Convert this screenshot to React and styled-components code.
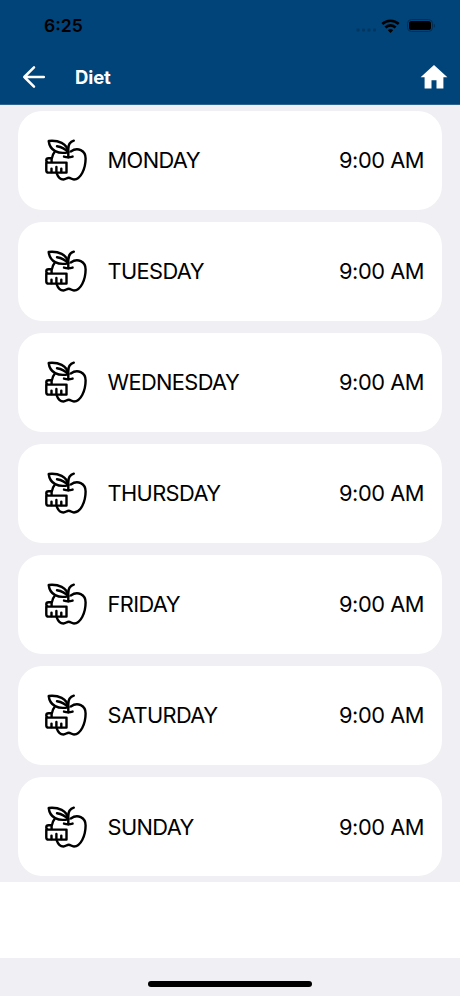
import React from 'react';
import styled, { createGlobalStyle } from 'styled-components'

const GlobalStyle = createGlobalStyle`
* {
  box-sizing: border-box;
}
body {
  margin: 0;
  background: #ffffff;
  font-family: Inter, "Liberation Sans", sans-serif;
}
`

const Screen = styled.div`
  display: flex;
  flex-direction: column;
  width: 460px;
  height: 996px;
  overflow: hidden;
  background: #ffffff;
`

const TopArea = styled.header`
  flex: none;
  height: 105px;
  border-bottom: 1px solid #2f6490;
  background: #004479;
`

const StatusBar = styled.div`
  display: flex;
  align-items: center;
  justify-content: space-between;
  height: 50px;
  padding: 1px 23px 0 44px;
`

const Clock = styled.span`
  font-size: 17.5px;
  font-weight: 600;
  color: #000000;
`

const StatusIcons = styled.div`
  display: flex;
  align-items: center;
`

const NavBar = styled.div`
  display: flex;
  align-items: center;
  height: 54px;
  padding: 0 12px 0 22px;
`

const Title = styled.h1`
  flex: 1;
  margin: 0 0 0 29px;
  font-size: 18.5px;
  font-weight: 700;
  letter-spacing: -0.1px;
  color: #ffffff;
`

const DayList = styled.main`
  display: flex;
  flex-direction: column;
  flex: none;
  gap: 11.4px;
  padding: 5.5px 18px 5.2px;
  background: #efeff4;
`

const DayCard = styled.div`
  display: flex;
  align-items: center;
  height: 99.65px;
  padding: 0 18px 0 26px;
  border-radius: 24px;
  background: #ffffff;
  font-size: 21.8px;
  color: #000000;
`

const DayName = styled.span`
  flex: 1;
  margin-left: 19.5px;
  letter-spacing: -0.6px;
`

const Time = styled.span`
  letter-spacing: -0.45px;
`

const Footer = styled.footer`
  display: flex;
  justify-content: center;
  height: 38px;
  margin-top: auto;
  padding-top: 23px;
  background: #efeff4;
`

const HomeIndicator = styled.div`
  width: 164px;
  height: 6px;
  border-radius: 3px;
  background: #000000;
`

const SignalIcon = () => (
  <svg width="22" height="20" viewBox="0 0 22 20" fill="#003660">
    <rect x="0.5" y="12.5" width="3" height="3" rx="1" />
    <rect x="6" y="12.5" width="3" height="3" rx="1" />
    <rect x="11.5" y="12.5" width="3" height="3" rx="1" />
    <rect x="17" y="12.5" width="3" height="3" rx="1" />
  </svg>
)

const WifiIcon = () => (
  <svg width="27" height="20" viewBox="1.5 0 27 20" fill="none" stroke="#000000" strokeWidth="2.6">
    <path d="M5.8 8a11.8 11.8 0 0 1 16.4 0" />
    <path d="M8.9 11.5a7.2 7.2 0 0 1 10.2 0" />
    <path d="M14 17l-2.7-2.8a3.9 3.9 0 0 1 5.4 0z" fill="#000000" stroke="none" />
  </svg>
)

const BatteryIcon = () => (
  <svg width="32" height="20" viewBox="0 0 32 20">
    <rect x="2.5" y="3.5" width="25" height="12" rx="4" fill="none" stroke="#002d51" />
    <rect x="4" y="5" width="22" height="9" rx="2.6" fill="#000000" />
    <path d="M28.8 7.8c1.6.5 1.6 3.4 0 3.9z" fill="#002d51" />
  </svg>
)

const BackIcon = () => (
  <svg width="24" height="24" viewBox="0 0 24 24" fill="none" stroke="#ffffff" strokeWidth="2.5" strokeLinecap="round" strokeLinejoin="round">
    <path d="M21.8 12H2.3M12 2.3L2.3 12l9.7 9.7" />
  </svg>
)

const HomeIcon = () => (
  <svg width="28" height="26" viewBox="0 0 28 26" fill="#ffffff">
    <path d="M14 1L.6 13.3h4V24.6h6.9v-8.3h5v8.3h6.9V13.3h4z" />
  </svg>
)

const AppleIcon = () => (
  <svg width="44" height="44" viewBox="0 0 44 44" fill="none" stroke="#000000" strokeWidth="2.4" strokeLinecap="round" strokeLinejoin="round">
    {/* leaf and stem */}
    <path d="M4.7 3C14 2 23.4 5.4 24.2 14.3C14.5 16.4 5.8 13 4.7 3z" />
    <path d="M13 8.3C17.2 9 21.5 11.2 24.2 14.3" />
    <path d="M29.8 2.7C26 3.8 24.3 7.4 24.3 11V19.2" />
    <path d="M20 18.6Q24.3 20 28.6 18.6" />
    {/* apple */}
    <path d="M26.8 13.4C33.6 8.8 41.6 12.4 41.6 20.5C41.6 30.5 36.8 41.5 30 41.5C27.6 41.5 26.6 39.7 24.8 39.7C22.8 39.7 21.8 41.5 19.4 41.5C16.2 41.5 14 39 12.8 35.6" />
    <path d="M10.6 14C9.1 15.8 8.2 17.8 8 20" />
    {/* measuring tape */}
    <path d="M2.3 24.6V32.4Q2.3 34.6 4.6 34.6H22.5V24.6H4.4Q2.3 24.6 2.3 22.6V22.2Q2.3 20.2 4.6 20.2H7.6V24.6" />
    <path d="M7.5 34V30.6M12.4 34V29M17.3 34V30.6" />
  </svg>
)

const days = [
  { name: 'MONDAY', time: '9:00 AM' },
  { name: 'TUESDAY', time: '9:00 AM' },
  { name: 'WEDNESDAY', time: '9:00 AM' },
  { name: 'THURSDAY', time: '9:00 AM' },
  { name: 'FRIDAY', time: '9:00 AM' },
  { name: 'SATURDAY', time: '9:00 AM' },
  { name: 'SUNDAY', time: '9:00 AM' },
]

const App = () => (
  <>
    <GlobalStyle />
    <Screen>
      <TopArea>
        <StatusBar>
          <Clock>6:25</Clock>
          <StatusIcons>
            <SignalIcon />
            <WifiIcon />
            <BatteryIcon />
          </StatusIcons>
        </StatusBar>
        <NavBar>
          <BackIcon />
          <Title>Diet</Title>
          <HomeIcon />
        </NavBar>
      </TopArea>
      <DayList>
        {days.map(day =>
          <DayCard key={day.name}>
            <AppleIcon />
            <DayName>{day.name}</DayName>
            <Time>{day.time}</Time>
          </DayCard>
        )}
      </DayList>
      <Footer>
        <HomeIndicator />
      </Footer>
    </Screen>
  </>
)

export default App;
